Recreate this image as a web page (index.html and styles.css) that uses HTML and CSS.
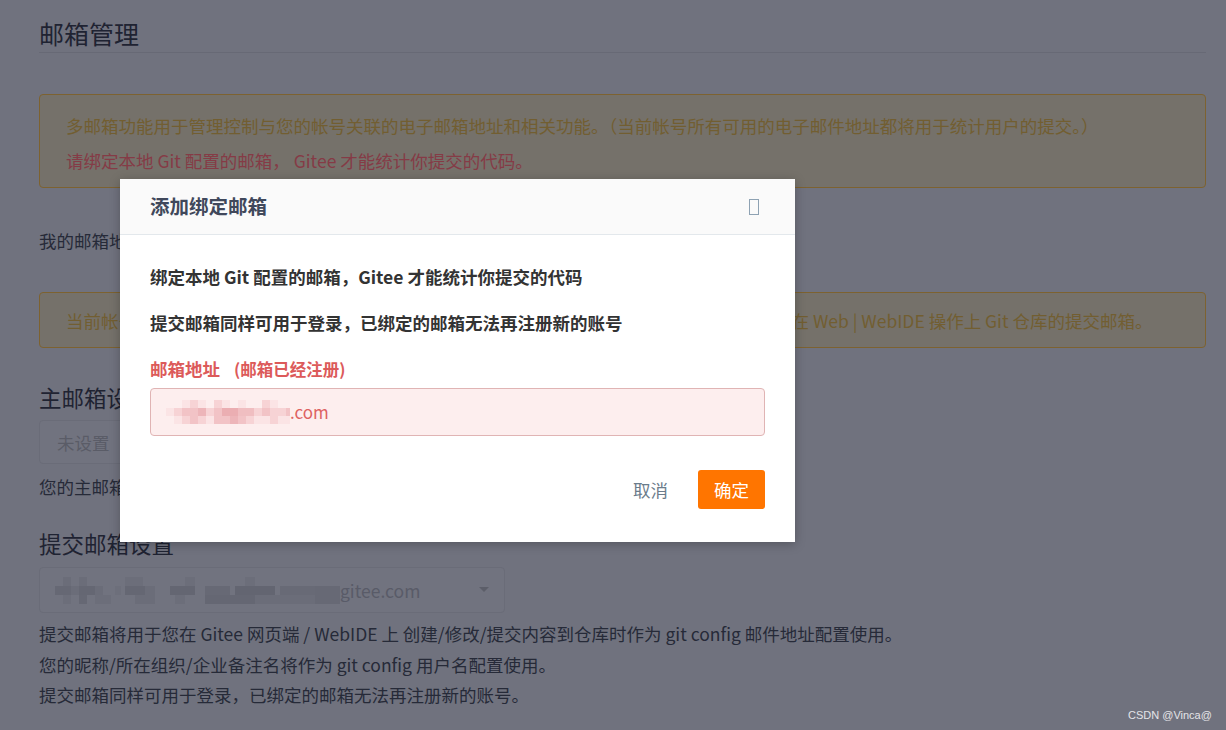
FILE: index.html
```html
<!DOCTYPE html>
<html lang="zh-CN">
<head>
<meta charset="utf-8">
<title>邮箱管理</title>
<link rel="stylesheet" href="styles.css">
</head>
<body>
<div class="page">
  <h2 class="page-title">邮箱管理</h2>

  <div class="alert alert-info">
    <p class="alert-line">多邮箱功能用于管理控制与您的帐号关联的电子邮箱地址和相关功能。（当前帐号所有可用的电子邮件地址都将用于统计用户的提交。）</p>
    <p class="alert-line alert-red">请绑定本地 Git 配置的邮箱， Gitee 才能统计你提交的代码。</p>
  </div>

  <p class="text-line mail-list">我的邮箱地址</p>

  <div class="alert alert-single">
    <p class="alert-line">当前帐号的提交邮箱默认为主邮箱，如未设置主邮箱，系统将使用平台分配的邮箱地址作为您<span class="gap"></span>在 Web | WebIDE 操作上 Git 仓库的提交邮箱。</p>
  </div>

  <h3 class="section-title">主邮箱设置</h3>
  <div class="field-box">
    <span class="placeholder">未设置</span>
  </div>
  <p class="text-line hint">您的主邮箱将用于接收通知</p>

  <h3 class="section-title commit-title">提交邮箱设置</h3>
  <div class="field-box select-box">
    <svg class="blur" width="285" height="27" viewBox="0 0 285 27" shape-rendering="crispEdges">
      <rect x="8" y="0" width="8" height="9" fill="#6b6d79"/>
      <rect x="24" y="0" width="8" height="9" fill="#6b6d79"/>
      <rect x="70" y="0" width="18" height="9" fill="#6c6e7a"/>
      <rect x="130" y="0" width="10" height="9" fill="#6c6e7a"/>
      <rect x="190" y="0" width="10" height="9" fill="#6c6e7a"/>
      <rect x="0" y="9" width="16" height="9" fill="#666874"/>
      <rect x="16" y="9" width="8" height="9" fill="#6b6d79"/>
      <rect x="24" y="9" width="16" height="9" fill="#656773"/>
      <rect x="40" y="9" width="8" height="9" fill="#6b6d79"/>
      <rect x="60" y="9" width="6" height="9" fill="#6d6f7b"/>
      <rect x="70" y="9" width="20" height="9" fill="#656773"/>
      <rect x="90" y="9" width="10" height="9" fill="#6b6d79"/>
      <rect x="115" y="9" width="25" height="9" fill="#646672"/>
      <rect x="150" y="9" width="25" height="9" fill="#676975"/>
      <rect x="180" y="9" width="40" height="9" fill="#636571"/>
      <rect x="225" y="9" width="35" height="9" fill="#686a76"/>
      <rect x="260" y="9" width="25" height="9" fill="#676975"/>
      <rect x="8" y="18" width="8" height="9" fill="#6c6e7a"/>
      <rect x="24" y="18" width="8" height="9" fill="#666874"/>
      <rect x="40" y="18" width="16" height="9" fill="#6c6e7a"/>
      <rect x="80" y="18" width="20" height="9" fill="#6b6d79"/>
      <rect x="120" y="18" width="10" height="9" fill="#6c6e7a"/>
      <rect x="150" y="18" width="50" height="9" fill="#656773"/>
      <rect x="200" y="18" width="60" height="9" fill="#6b6d79"/>
      <rect x="260" y="18" width="25" height="9" fill="#676975"/>
    </svg>
    <span class="select-text">gitee.com</span>
    <span class="caret"></span>
  </div>
  <div class="notes">
    <p class="text-line">提交邮箱将用于您在 Gitee 网页端 / WebIDE 上 创建/修改/提交内容到仓库时作为 git config 邮件地址配置使用。</p>
    <p class="text-line">您的昵称/所在组织/企业备注名将作为 git config 用户名配置使用。</p>
    <p class="text-line">提交邮箱同样可用于登录，已绑定的邮箱无法再注册新的账号。</p>
  </div>
</div>

<div class="modal">
  <div class="modal-header">
    <span class="modal-title">添加绑定邮箱</span>
    <span class="modal-close" aria-label="关闭"></span>
  </div>
  <div class="modal-body">
    <p class="modal-text">绑定本地 Git 配置的邮箱，Gitee 才能统计你提交的代码</p>
    <p class="modal-text">提交邮箱同样可用于登录，已绑定的邮箱无法再注册新的账号</p>
    <div class="form-label">邮箱地址 <span class="form-error">(邮箱已经注册)</span></div>
    <div class="email-input">
      <svg class="blur" width="124" height="24" viewBox="0 0 124 24" shape-rendering="crispEdges">
        <rect x="16" y="0" width="8" height="8" fill="#fbe4e5"/>
        <rect x="24" y="0" width="8" height="8" fill="#f7d3d5"/>
        <rect x="32" y="0" width="8" height="8" fill="#fbe4e5"/>
        <rect x="48" y="0" width="8" height="8" fill="#f7d3d5"/>
        <rect x="56" y="0" width="8" height="8" fill="#fbe4e5"/>
        <rect x="72" y="0" width="8" height="8" fill="#fbe4e5"/>
        <rect x="96" y="0" width="8" height="8" fill="#f7d3d5"/>
        <rect x="104" y="0" width="8" height="8" fill="#fbe4e5"/>
        <rect x="0" y="8" width="8" height="8" fill="#fbe4e5"/>
        <rect x="8" y="8" width="8" height="8" fill="#f7d3d5"/>
        <rect x="16" y="8" width="16" height="8" fill="#f2c3c6"/>
        <rect x="32" y="8" width="8" height="8" fill="#edb5b9"/>
        <rect x="40" y="8" width="8" height="8" fill="#f7d3d5"/>
        <rect x="48" y="8" width="8" height="8" fill="#f2c3c6"/>
        <rect x="56" y="8" width="16" height="8" fill="#ebaeb2"/>
        <rect x="72" y="8" width="16" height="8" fill="#f0bec1"/>
        <rect x="88" y="8" width="8" height="8" fill="#f7d3d5"/>
        <rect x="96" y="8" width="8" height="8" fill="#f2c3c6"/>
        <rect x="104" y="8" width="16" height="8" fill="#f7d3d5"/>
        <rect x="120" y="8" width="4" height="8" fill="#f2c3c6"/>
        <rect x="8" y="16" width="8" height="8" fill="#fbe4e5"/>
        <rect x="16" y="16" width="8" height="8" fill="#f7d3d5"/>
        <rect x="24" y="16" width="8" height="8" fill="#f2c3c6"/>
        <rect x="32" y="16" width="8" height="8" fill="#f7d3d5"/>
        <rect x="40" y="16" width="8" height="8" fill="#fbe4e5"/>
        <rect x="48" y="16" width="16" height="8" fill="#f2c3c6"/>
        <rect x="64" y="16" width="8" height="8" fill="#edb5b9"/>
        <rect x="72" y="16" width="8" height="8" fill="#f2c3c6"/>
        <rect x="80" y="16" width="8" height="8" fill="#f7d3d5"/>
        <rect x="88" y="16" width="16" height="8" fill="#fbe4e5"/>
        <rect x="104" y="16" width="8" height="8" fill="#f7d3d5"/>
        <rect x="112" y="16" width="12" height="8" fill="#fbe4e5"/>
      </svg>
      <span class="email-text">.com</span>
    </div>
  </div>
  <div class="modal-footer">
    <button class="btn btn-cancel" type="button">取消</button>
    <button class="btn btn-primary" type="button">确定</button>
  </div>
</div>

<div class="watermark">CSDN @Vinca@</div>
</body>
</html>
```

FILE: styles.css
```css
* { box-sizing: border-box; }

html, body {
  margin: 0;
  padding: 0;
  width: 1226px;
  height: 730px;
  overflow: hidden;
}

body {
  background: #70727e;
  font-family: "Noto Sans CJK SC", "Noto Sans", sans-serif;
  font-size: 17.5px;
  color: #262a38;
  position: relative;
}

p { margin: 0; }

.page {
  padding: 16px 0 0 39px;
  width: 1206px;
}

.page-title {
  margin: 0;
  font-size: 25px;
  font-weight: 400;
  line-height: 34px;
  padding-bottom: 2px;
  color: #1f2332;
  border-bottom: 1px solid #676975;
}

.alert {
  margin-top: 41px;
  border: 1px solid #7d6230;
  border-radius: 4px;
  background: #75716a;
  padding: 13px 20px 9px 26px;
  color: #725e31;
}

.alert-line {
  line-height: 35px;
  white-space: nowrap;
}

.alert-red { color: #853b46; }

.gap {
  display: inline-block;
  width: 8px;
}

.text-line {
  line-height: 30px;
  white-space: nowrap;
  color: #262a38;
}

.mail-list { margin-top: 38px; }

.alert-single {
  margin-top: 36px;
  padding: 10px 20px 9px 26px;
}

.section-title {
  margin: 34px 0 0;
  font-size: 22.5px;
  font-weight: 400;
  line-height: 30px;
  color: #1f2332;
}

.field-box {
  margin-top: 8px;
  width: 466px;
  height: 44px;
  border: 1px solid #6a6c78;
  border-radius: 4px;
  background: #71737f;
  display: flex;
  align-items: center;
  padding-left: 17px;
}

.placeholder { color: #5a5c67; }

.hint { margin-top: 8px; }

.commit-title { margin-top: 26px; }

.select-box {
  margin-top: 9px;
  height: 46px;
  padding-left: 15px;
  position: relative;
}

.blur { display: block; flex: none; }

.select-text {
  color: #595b68;
}

.caret {
  position: absolute;
  right: 15px;
  top: 19px;
  width: 0;
  height: 0;
  border-left: 5px solid transparent;
  border-right: 5px solid transparent;
  border-top: 5px solid #5c5e69;
}

.notes {
  margin-top: 6px;
  color: #2a2e3c;
}

.notes .text-line { line-height: 30.5px; }

/* modal */
.modal {
  position: absolute;
  left: 120px;
  top: 179px;
  width: 675px;
  height: 363px;
  background: #ffffff;
  box-shadow: 0 2px 10px rgba(0, 0, 0, 0.25);
  display: flex;
  flex-direction: column;
}

.modal-header {
  height: 56px;
  background: #fafafa;
  border-bottom: 1px solid #e3e8ec;
  display: flex;
  align-items: center;
  justify-content: space-between;
  padding: 0 36px 2px 30px;
}

.modal-title {
  font-size: 19.5px;
  font-weight: 700;
  color: #40485b;
}

.modal-close {
  width: 10px;
  height: 16px;
  border: 1.5px solid #8ea2b3;
  margin-top: 2px;
}

.modal-body {
  padding: 28px 30px 0 30px;
}

.modal-text {
  font-size: 17.5px;
  font-weight: 700;
  color: #333333;
  line-height: 28px;
  margin-bottom: 18px;
}

.form-label {
  font-size: 17.5px;
  font-weight: 700;
  color: #dc5a5a;
  line-height: 28px;
  margin-top: 0;
}

.form-error {
  font-size: 16.5px;
  margin-left: 10px;
}

.email-input {
  margin-top: 5px;
  height: 48px;
  border: 1px solid #e0b4b4;
  border-radius: 4px;
  background: #fdeeee;
  display: flex;
  align-items: center;
  padding-left: 15px;
}

.email-text {
  color: #de6262;
  font-size: 17px;
  margin-top: -1px;
}

.modal-footer {
  margin-top: 34px;
  display: flex;
  justify-content: flex-end;
  align-items: center;
  gap: 12px;
  padding-right: 30px;
}

.btn {
  font-family: inherit;
  font-size: 17.5px;
  border: none;
  height: 39px;
  border-radius: 3px;
  cursor: pointer;
  padding: 0 16px;
  line-height: 39px;
}

.btn-cancel {
  background: transparent;
  color: #6b7c8b;
  padding: 0 18px;
}

.btn-primary {
  background: #ff7500;
  color: #ffffff;
  width: 67px;
  padding: 0;
}

.watermark {
  position: absolute;
  left: 1128px;
  top: 707px;
  font-family: "Liberation Sans", Arial, sans-serif;
  font-size: 11px;
  color: #e4e4e8;
  line-height: 16px;
}
```
